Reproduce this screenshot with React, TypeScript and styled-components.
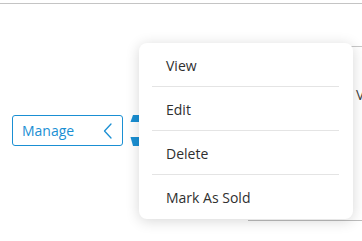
import React from 'react'
import styled, { createGlobalStyle } from 'styled-components'

const GlobalStyle = createGlobalStyle`
  html, body {
    margin: 0;
    padding: 0;
    background: #fff;
    overflow: hidden;
  }
  body {
    font-family: "Open Sans", "Noto Sans", sans-serif;
    color: #2f2f2f;
  }
`

const Page = styled.div`
  position: relative;
  width: 362px;
  height: 241px;
  overflow: hidden;
`

const TopRule = styled.div`
  margin-top: 3px;
  border-top: 1px solid #c4c4c4;
`

const Content = styled.div`
  display: flex;
  align-items: flex-start;
`

const ActionColumn = styled.div`
  width: 248px;
  flex-shrink: 0;
  display: flex;
  align-items: center;
  gap: 7px;
  padding: 110px 0 0 12px;
  box-sizing: border-box;
`

const ManageButton = styled.button`
  display: flex;
  align-items: center;
  justify-content: space-between;
  width: 111px;
  height: 31px;
  padding: 0 10px 0 9px;
  box-sizing: border-box;
  background: #fff;
  border: 1px solid #1a8fd3;
  border-radius: 3px;
  color: #1a8fd3;
  font-family: "Open Sans", "Noto Sans", sans-serif;
  font-size: 14px;
  cursor: pointer;
`

const Cell = styled.div`
  flex: 1;
  margin-top: 42px;
  height: 175px;
  border-top: 1px solid #c8c8c8;
  border-bottom: 1px solid #bdbdbd;
  padding: 38px 0 0 108px;
  box-sizing: border-box;
  font-size: 14px;
  color: #444;
  white-space: nowrap;
`

const Menu = styled.ul`
  position: absolute;
  left: 139px;
  top: 43px;
  width: 214px;
  margin: 0;
  padding: 0;
  list-style: none;
  background: #fff;
  border-radius: 8px;
  box-shadow: 0 2px 14px rgba(0, 0, 0, 0.16);
`

const MenuItem = styled.li<{ last?: boolean }>`
  position: relative;
  height: 44px;
  display: flex;
  align-items: center;
  padding-left: 27px;
  font-size: 14px;
  color: #2f2f2f;
  cursor: pointer;

  &::after {
    content: '';
    display: ${props => (props.last ? 'none' : 'block')};
    position: absolute;
    left: 13px;
    right: 14px;
    bottom: 0;
    border-bottom: 1px solid #e4e4e4;
  }
`

const items = ['View', 'Edit', 'Delete', 'Mark As Sold']

function App () {
  return (
    <Page>
      <GlobalStyle />
      <TopRule />
      <Content>
        <ActionColumn>
          <ManageButton>
            Manage
            <svg width="9" height="16" viewBox="0 0 9 16" fill="none">
              <path d="M8 1 L1.5 8 L8 15" stroke="#1a8fd3" strokeWidth="1.3" strokeLinecap="round" strokeLinejoin="round" />
            </svg>
          </ManageButton>
          <svg width="12" height="33" viewBox="0 0 12 33">
            <polygon points="3,1 12,1 12,8 0.5,8" fill="#1a8fd3" />
            <polygon points="0.5,23 12,23 12,32 3,32" fill="#1a8fd3" />
          </svg>
        </ActionColumn>
        <Cell>Value</Cell>
      </Content>
      <Menu>
        {items.map((it, i) => (
          <MenuItem key={it} last={i === items.length - 1}>{it}</MenuItem>
        ))}
      </Menu>
    </Page>
  )
}

export default App
